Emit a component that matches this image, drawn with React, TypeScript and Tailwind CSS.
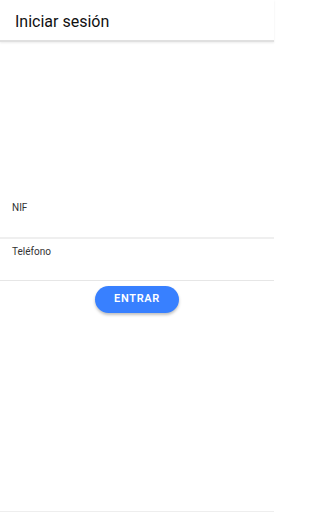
export default function App() {
  return (
    <div className="flex h-[512px] w-[274px] flex-col bg-white font-['Roboto',sans-serif] text-[#222]">
      <header className="flex h-[42px] shrink-0 items-center border-b-2 border-[#e0e0e0] px-[15px] shadow-[0_1px_2px_rgba(0,0,0,0.08)]">
        <h1 className="pt-[3px] text-[16px] font-normal leading-none text-[#111]">Iniciar sesión</h1>
      </header>
      <main className="flex flex-1 flex-col pt-[152px]">
        <div className="h-[45px] border-b-2 border-[#efefef] px-3 pt-[9px]">
          <label className="block text-[10px] leading-none text-[#333]">NIF</label>
        </div>
        <div className="h-[42px] border-b border-[#e6e6e6] px-3 pt-[8px]">
          <label className="block text-[10px] leading-none text-[#333]">Teléfono</label>
        </div>
        <div className="flex justify-center pt-[5px]">
          <button className="h-[27px] w-[84px] rounded-full bg-[#3880ff] text-[11px] font-semibold tracking-[0.06em] text-white shadow-[0_2px_3px_rgba(0,0,0,0.25)]">
            ENTRAR
          </button>
        </div>
      </main>
      <div className="h-px shrink-0 bg-[#eeeeee]" />
    </div>
  );
}
